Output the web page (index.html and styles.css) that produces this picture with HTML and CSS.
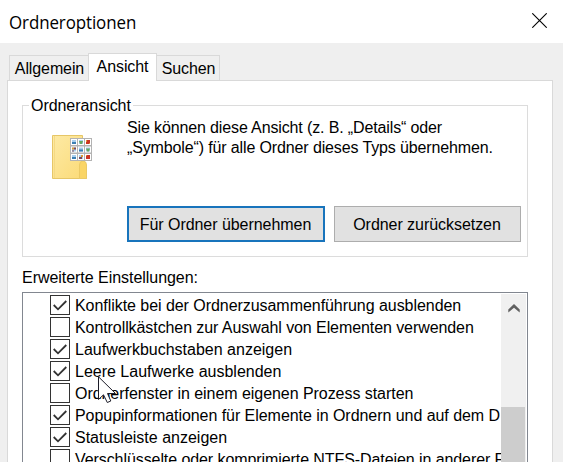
FILE: index.html
```html
<!DOCTYPE html>
<html lang="de">
<head>
  <meta charset="UTF-8">
  <meta name="viewport" content="width=device-width, initial-scale=1.0">
  <title>Ordneroptionen</title>
  <link rel="stylesheet" href="styles.css">
</head>
<body>
  <div class="titlebar">
    <span class="title">Ordneroptionen</span>
    <svg class="close" width="15" height="15" viewBox="0 0 15 15">
      <path d="M0.3 0.3L14.7 14.7M14.7 0.3L0.3 14.7" stroke="#000" stroke-width="1.1"/>
    </svg>
  </div>

  <div class="tabs">
    <div class="tab">Allgemein</div>
    <div class="tab active">Ansicht</div>
    <div class="tab last">Suchen</div>
  </div>

  <div class="panel">
    <div class="group">
      <div class="legend"><span>Ordneransicht</span></div>
      <div class="group-body">
        <svg class="folder" width="41" height="46" viewBox="0 0 41 46">
          <defs>
            <linearGradient id="fold" x1="0" y1="0" x2="1" y2="1">
              <stop offset="0" stop-color="#fdeaa5"/>
              <stop offset="1" stop-color="#fbda76"/>
            </linearGradient>
            <g id="pic">
              <rect width="6" height="6" fill="#fff"/>
              <rect x="1" y="1" width="4" height="4" fill="#a9cfee"/>
            </g>
          </defs>
          <path d="M0.500 0.500H30.500V28L34.500 30V43.500H0.500Z" fill="url(#fold)" stroke="#e6c667"/>
          <path d="M2.500 1V43" stroke="#f5d983"/>
          <path d="M27.500 43.500V30Q27.500 26 31 26Q34.500 26 34.500 30V43.500Z" fill="#fad566" stroke="#ebca66"/>
          <rect x="18" y="3" width="22" height="23" fill="#b3b3b3"/>
          <use href="#pic" x="19" y="4"/><use href="#pic" x="26" y="4"/><use href="#pic" x="33" y="4"/>
          <use href="#pic" x="19" y="11.500"/><use href="#pic" x="26" y="11.500"/><use href="#pic" x="33" y="11.500"/>
          <use href="#pic" x="19" y="19"/><use href="#pic" x="26" y="19"/><use href="#pic" x="33" y="19"/>
          <path d="M20 7h4v2h-4zM27 14.500h4v2h-4zM20 22h4v2h-4z" fill="#3b7fb5"/>
          <path d="M27 6h4l-1 3h-2zM34 13.500h4l-1 3h-2z" fill="#65a960"/>
          <path d="M34 5h4v4h-4zM34 20h4v4h-4z" fill="#cb3524"/>
          <path d="M34 5h1v2h-1zM37 8h1v1h-1zM34 20h1v1h-1zM20 12.500h2v2h-2zM29 20h2v2h-2z" fill="#d99b36"/>
          <path d="M22 12.500h2v2h-2zM20 15.500h2v1h-2zM27 22h3v2h-3z" fill="#7b4b59"/>
        </svg>
        <div class="group-main">
          <p>Sie können diese Ansicht (z. B. „Details“ oder<br>„Symbole“) für alle Ordner dieses Typs übernehmen.</p>
          <div class="buttons">
            <button class="btn primary">Für Ordner übernehmen</button>
            <button class="btn reset">Ordner zurücksetzen</button>
          </div>
        </div>
      </div>
    </div>

    <div class="list-label">Erweiterte Einstellungen:</div>
    <div class="list">
      <div class="rows">
        <div class="row"><span class="box checked"></span><span class="tight">Konflikte bei der Ordnerzusammenführung ausblenden</span></div>
        <div class="row"><span class="box"></span><span class="tighter">Kontrollkästchen zur Auswahl von Elementen verwenden</span></div>
        <div class="row"><span class="box checked"></span><span>Laufwerkbuchstaben anzeigen</span></div>
        <div class="row"><span class="box checked"></span><span>Leere Laufwerke ausblenden</span></div>
        <div class="row"><span class="box"></span><span class="tight">Ordnerfenster in einem eigenen Prozess starten</span></div>
        <div class="row"><span class="box checked"></span><span class="tight">Popupinformationen für Elemente in Ordnern und auf dem D</span></div>
        <div class="row"><span class="box checked"></span><span>Statusleiste anzeigen</span></div>
        <div class="row"><span class="box"></span><span class="tighter">Verschlüsselte oder komprimierte NTFS-Dateien in anderer F</span></div>
      </div>
      <div class="scrollbar">
        <svg width="12" height="9" viewBox="0 0 12 9">
          <path d="M0.300 8.500V5.500L6 0L11.700 5.500V8.500L6 3.700Z" fill="#606060"/>
        </svg>
        <div class="thumb"></div>
      </div>
    </div>
  </div>

  <svg class="cursor" width="20" height="29" viewBox="0 0 20 29">
    <path d="M0.500 0.800V23.500L5.500 18.800L9.300 26.500L12.800 25L9.500 17.500H17.500Z" fill="#fff" stroke="#1c1c28"/>
  </svg>

  <script>
    const tick = '<svg width="14" height="11" viewBox="0 0 14 11"><path d="M0.700 5L5 9.300L13.300 1" fill="none" stroke="#333" stroke-width="1.800"/></svg>';
    document.querySelectorAll('.checked').forEach((box) => {
      box.innerHTML = tick;
    });
  </script>
</body>
</html>
```
FILE: styles.css
```css
* {
  box-sizing: border-box;
}

body {
  margin: 0;
  height: 462px;
  overflow: hidden;
  display: flex;
  flex-direction: column;
  background: #efefef;
  color: #000;
  font-family: "Liberation Sans", Arial, sans-serif;
  font-size: 16px;
  line-height: 20px;
}

.titlebar {
  flex: none;
  height: 43px;
  padding: 0 16px 2px 9px;
  display: flex;
  align-items: center;
  justify-content: space-between;
  background: #fff;
}

.title {
  padding-top: 2px;
  font-family: "Open Sans", "Noto Sans", sans-serif;
  font-size: 18px;
  transform: scaleX(0.94);
  transform-origin: left;
  letter-spacing: -0.1px;
}

.tabs {
  flex: none;
  height: 38px;
  padding-left: 9px;
  display: flex;
  align-items: flex-end;
  position: relative;
  z-index: 1;
  margin-bottom: -1px;
}

.tab {
  width: 80px;
  height: 26px;
  padding: 3px 0 0 1px;
  text-align: center;
  letter-spacing: -0.1px;
  white-space: nowrap;
  border: 1px solid #d9d9d9;
  background: #efefef;
}

.tab.active {
  width: 69px;
  height: 28px;
  margin-left: -1px;
  padding: 3px 0 0;
  border-bottom: 0;
  background: #fff;
}

.tab.last {
  width: 64px;
  margin-left: -1px;
}

.panel {
  flex: none;
  width: 546px;
  height: 382px;
  margin-left: 7px;
  padding: 14px 24px 0 14px;
  border: 1px solid #d9d9d9;
  border-bottom: 0;
  background: #fff;
}

.group {
  width: 506px;
  height: 162px;
  display: flex;
  flex-direction: column;
}

.legend {
  height: 20px;
  padding: 1px 0 0 7px;
  letter-spacing: -0.05px;
}

.legend span {
  position: relative;
  padding: 0 2px;
  background: #fff;
}

.group-body {
  flex: 1;
  margin-top: -10px;
  padding: 12px 0 0 29px;
  display: flex;
  gap: 34px;
  border: 1px solid #dcdcdc;
}

.folder {
  flex: none;
  margin-top: 17px;
}

.group-main p {
  margin: 0;
  letter-spacing: -0.13px;
  white-space: nowrap;
}

.buttons {
  display: flex;
  gap: 9px;
  margin-top: 48px;
}

.btn {
  width: 187px;
  height: 36px;
  padding: 1px 1px 0 0;
  border: 1px solid #adadad;
  background: #e1e1e1;
  color: #000;
  font: inherit;
  letter-spacing: -0.05px;
  white-space: nowrap;
}

.btn.primary {
  width: 198px;
  border: 2px solid #1874bc;
}

.list-label {
  height: 35px;
  padding-top: 11px;
  letter-spacing: -0.04px;
}

.list {
  width: 506px;
  height: 170px;
  padding: 1px 1px 0;
  display: flex;
  border: 1px solid #828790;
  border-bottom: 0;
}

.rows {
  flex: 1;
  min-width: 0;
  overflow: hidden;
  padding-left: 26px;
}

.row {
  height: 22px;
  display: flex;
  align-items: center;
  gap: 5px;
  white-space: nowrap;
}

.row span:last-child {
  padding-top: 2px;
}

.row .tight {
  letter-spacing: -0.05px;
}

.row .tighter {
  letter-spacing: -0.08px;
}

.box {
  flex: none;
  width: 20px;
  height: 20px;
  display: flex;
  align-items: center;
  justify-content: center;
  border: 1px solid #333;
  background: #fff;
}

.scrollbar {
  flex: none;
  width: 25px;
  display: flex;
  flex-direction: column;
  align-items: center;
  justify-content: space-between;
  padding-top: 10px;
  background: #f0f0f0;
}

.thumb {
  width: 24px;
  height: 55px;
  margin-right: 1px;
  background: #cdcdcd;
}

/* mouse pointer floats over the list */
.cursor {
  position: absolute;
  left: 98px;
  top: 376px;
}
```
